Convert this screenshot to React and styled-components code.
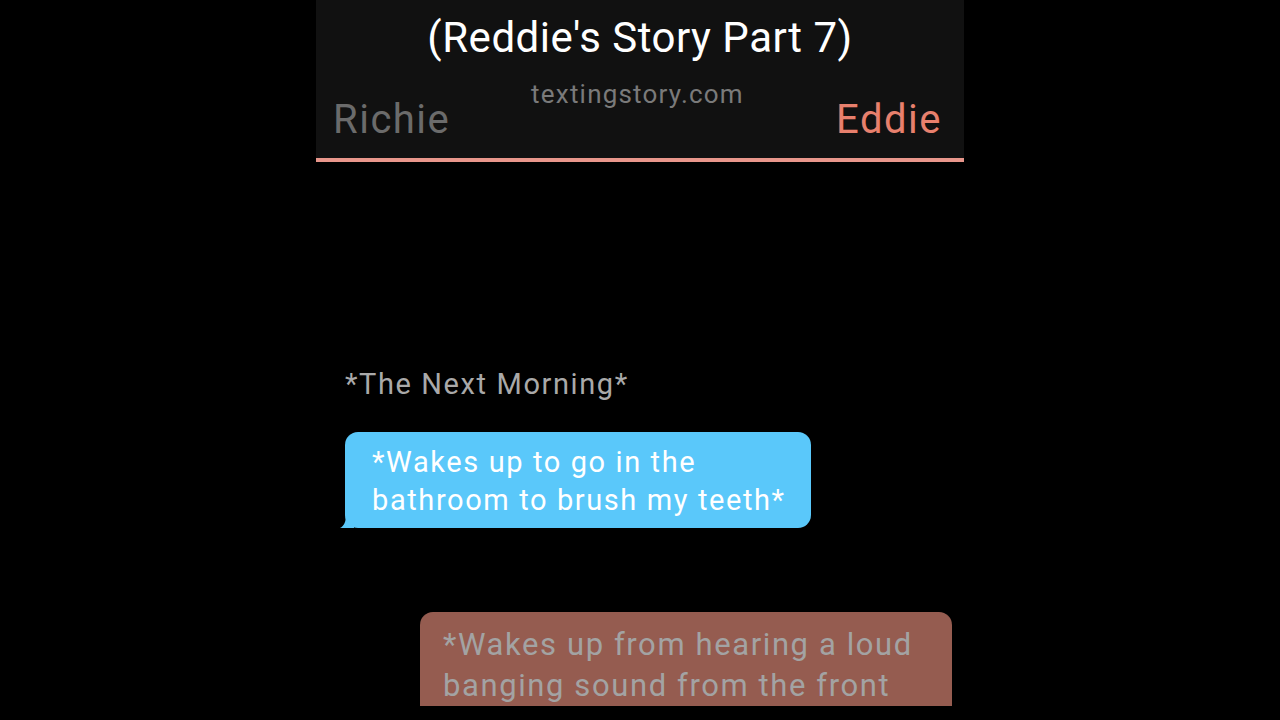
import React from 'react';
import styled, { createGlobalStyle } from 'styled-components';

const GlobalStyle = createGlobalStyle`
  html, body {
    margin: 0;
    padding: 0;
    background: #000;
  }
  body {
    font-family: Roboto, "Noto Sans", sans-serif;
  }
`;

const Page = styled.div`
  width: 1280px;
  height: 720px;
  display: flex;
  justify-content: center;
  background: #000;
  overflow: hidden;
`;

const Phone = styled.div`
  width: 648px;
  display: flex;
  flex-direction: column;
`;

const Header = styled.header`
  height: 158px;
  background: #111111;
  border-bottom: 4px solid #e8968b;
  display: flex;
  flex-direction: column;
`;

const Title = styled.h1`
  margin: 0;
  padding-top: 14px;
  font-size: 42px;
  font-weight: 400;
  letter-spacing: 0.5px;
  color: #fff;
  text-align: center;
  line-height: 48px;
`;

const Names = styled.div`
  display: grid;
  grid-template-columns: 1fr auto 1fr;
  align-items: start;
  padding: 0 22px 0 17px;
`;

const Name = styled.span`
  font-size: 40px;
  line-height: 48px;
  letter-spacing: 1.5px;
  margin-top: 34px;
  color: ${({ $color }) => $color};
  text-align: ${({ $align }) => $align};
`;

const Site = styled.span`
  font-size: 26px;
  line-height: 30px;
  letter-spacing: 1.2px;
  margin-top: 17px;
  color: #7a7a7a;
`;

const Chat = styled.main`
  height: 544px;
  overflow: hidden;
  display: flex;
  flex-direction: column;
  padding: 0 12px 0 29px;
`;

const Note = styled.p`
  margin: 204px 0 0;
  font-size: 29px;
  line-height: 36px;
  letter-spacing: 1.6px;
  color: #a9a9a9;
`;

const Bubble = styled.div`
  position: relative;
  align-self: ${({ $right }) => ($right ? 'flex-end' : 'flex-start')};
  background: ${({ $bg }) => $bg};
  color: ${({ $fg }) => $fg};
  border-radius: 13px;
  font-size: ${({ $size }) => $size}px;
  line-height: ${({ $lh }) => $lh}px;
  letter-spacing: 1.6px;
  width: ${({ $w }) => $w}px;
  box-sizing: border-box;
  padding: ${({ $pad }) => $pad};
  margin-top: ${({ $mt }) => $mt}px;
  flex-shrink: 0;
`;

const Tail = styled.svg`
  position: absolute;
  left: -5px;
  bottom: 0;
`;

export default function App() {
  return (
    <Page>
      <GlobalStyle />
      <Phone>
        <Header>
          <Title>(Reddie's Story Part 7)</Title>
          <Names>
            <Name $color="#6b6b6b" $align="left">Richie</Name>
            <Site>textingstory.com</Site>
            <Name $color="#e8806d" $align="right">Eddie</Name>
          </Names>
        </Header>
        <Chat>
          <Note>*The Next Morning*</Note>
          <Bubble $bg="#5ac8fa" $fg="#fff" $size={29} $lh={38} $w={466} $pad="11px 10px 9px 27px" $mt={30}>
            *Wakes up to go in the bathroom to brush my teeth*
            <Tail width="14" height="14" viewBox="0 0 14 14">
              <path d="M14 0 L14 14 L0 14 C4 12 6 8 6 0 Z" fill="#5ac8fa" />
            </Tail>
          </Bubble>
          <Bubble $right $bg="#955c50" $fg="#a3a3a3" $size={31} $lh={41} $w={532} $pad="12px 16px 20px 23px" $mt={84}>
            *Wakes up from hearing a loud banging sound from the front door*
          </Bubble>
        </Chat>
      </Phone>
    </Page>
  );
}
